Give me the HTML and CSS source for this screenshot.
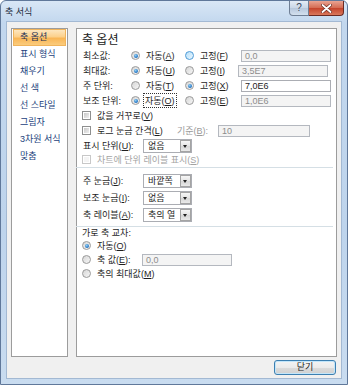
FILE: index.html
```html
<!DOCTYPE html>
<html lang="ko">

<head>
    <meta charset="UTF-8">
    <meta name="viewport" content="width=device-width, initial-scale=1.0">
    <link rel="stylesheet" href="styles.css">
</head>

<body>
    <div class="window">
        <div class="titlebar">
            <span class="title">축 서식</span>
            <div class="caption-btns">
                <span class="cap-help">?</span>
                <span class="cap-close">
                    <svg width="11" height="9" viewBox="0 0 11 9">
                        <path d="M1.5 1 L9.5 8 M9.5 1 L1.5 8" stroke="#6a2a20" stroke-width="3.2" stroke-linecap="round"/>
                        <path d="M1.5 1 L9.5 8 M9.5 1 L1.5 8" stroke="#fff" stroke-width="1.8" stroke-linecap="round"/>
                    </svg>
                </span>
            </div>
        </div>

        <div class="dialog">
            <div class="panels">
                <ul class="nav">
                    <li class="nav-item selected">축 옵션</li>
                    <li class="nav-item">표시 형식</li>
                    <li class="nav-item">채우기</li>
                    <li class="nav-item">선 색</li>
                    <li class="nav-item">선 스타일</li>
                    <li class="nav-item">그림자</li>
                    <li class="nav-item">3차원 서식</li>
                    <li class="nav-item">맞춤</li>
                </ul>

                <div class="content">
                    <h2 class="heading">축 옵션</h2>

                    <!-- min / max / units -->
                    <div class="opt-row">
                        <span class="opt-label">최소값:</span>
                        <span class="radio-item"><span class="radio on"></span><span>자동(<u>A</u>)</span></span>
                        <span class="radio-item second"><span class="radio hot"></span><span>고정(<u>F</u>)</span></span>
                        <span class="textbox disabled">0,0</span>
                    </div>
                    <div class="opt-row">
                        <span class="opt-label">최대값:</span>
                        <span class="radio-item"><span class="radio on"></span><span>자동(<u>U</u>)</span></span>
                        <span class="radio-item second short"><span class="radio"></span><span>고정(<u>I</u>)</span></span>
                        <span class="textbox disabled">3,5E7</span>
                    </div>
                    <div class="opt-row">
                        <span class="opt-label">주 단위:</span>
                        <span class="radio-item"><span class="radio"></span><span>자동(<u>T</u>)</span></span>
                        <span class="radio-item second"><span class="radio on"></span><span>고정(<u>X</u>)</span></span>
                        <span class="textbox">7,0E6</span>
                    </div>
                    <div class="opt-row">
                        <span class="opt-label">보조 단위:</span>
                        <span class="radio-item"><span class="radio on"></span><span class="focus">자동(<u>O</u>)</span></span>
                        <span class="radio-item second"><span class="radio"></span><span>고정(<u>E</u>)</span></span>
                        <span class="textbox disabled">1,0E6</span>
                    </div>

                    <div class="check-row">
                        <span class="check-item"><span class="check"></span><span>값을 거꾸로(<u>V</u>)</span></span>
                    </div>
                    <div class="check-row">
                        <span class="check-item fixed"><span class="check"></span><span>로그 눈금 간격(<u>L</u>)</span></span>
                        <span class="base-label">기준(<u>B</u>):</span>
                        <span class="textbox disabled wide">10</span>
                    </div>
                    <div class="select-row first">
                        <span class="select-label">표시 단위(<u>U</u>):</span>
                        <span class="select"><span class="select-text">없음</span><span class="arrow"></span></span>
                    </div>
                    <div class="check-row last">
                        <span class="check-item muted"><span class="check"></span><span>차트에 단위 레이블 표시(<u>S</u>)</span></span>
                    </div>

                    <div class="sep"></div>

                    <div class="select-row">
                        <span class="select-label">주 눈금(<u>J</u>):</span>
                        <span class="select"><span class="select-text">바깥쪽</span><span class="arrow"></span></span>
                    </div>
                    <div class="select-row">
                        <span class="select-label">보조 눈금(<u>I</u>):</span>
                        <span class="select"><span class="select-text">없음</span><span class="arrow"></span></span>
                    </div>
                    <div class="select-row">
                        <span class="select-label">축 레이블(<u>A</u>):</span>
                        <span class="select"><span class="select-text">축의 열</span><span class="arrow"></span></span>
                    </div>

                    <div class="sep lower"></div>

                    <div class="cross-title">가로 축 교차:</div>
                    <div class="cross-row">
                        <span class="radio-item"><span class="radio on"></span><span>자동(<u>O</u>)</span></span>
                    </div>
                    <div class="cross-row">
                        <span class="radio-item value"><span class="radio"></span><span>축 값(<u>E</u>):</span></span>
                        <span class="textbox disabled">0,0</span>
                    </div>
                    <div class="cross-row">
                        <span class="radio-item"><span class="radio"></span><span>축의 최대값(<u>M</u>)</span></span>
                    </div>
                </div>
            </div>

            <div class="footer">
                <button class="close-btn">닫기</button>
            </div>
        </div>
    </div>
</body>

</html>
```

FILE: styles.css
```css
/* Base */
* {
    box-sizing: border-box;
}

body {
    margin: 0;
    font-family: "Liberation Sans", "Noto Sans CJK KR", sans-serif;
    font-size: 9px;
    color: #1e1e1e;
    background: #ffffff;
}

u {
    text-decoration: underline;
    text-underline-offset: 1px;
}

/* Window frame */
.window {
    width: 348px;
    height: 385px;
    border: 1px solid #60789a;
    border-radius: 6px 6px 0 0;
    background: linear-gradient(#d9e7f6, #c2d7ee 22px, #bed4ec 60%, #c9dcf0);
    display: flex;
    flex-direction: column;
}

.titlebar {
    height: 21px;
    display: flex;
    align-items: flex-start;
}

.title {
    margin: 5px 0 0 4px;
    line-height: 12px;
    color: #1c2b3c;
}

.caption-btns {
    margin-left: auto;
    margin-right: 3px;
    display: flex;
}

.cap-help {
    width: 20px;
    height: 15px;
    border: 1px solid #6f7f95;
    border-top: none;
    border-radius: 0 0 0 4px;
    background: linear-gradient(#e4ecf6, #c9d6e6 50%, #b6c7dc 51%, #d3e0ee);
    color: #39475a;
    font-size: 10px;
    line-height: 13px;
    text-align: center;
}

.cap-close {
    width: 35px;
    height: 15px;
    border: 1px solid #6b2a22;
    border-left: none;
    border-top: none;
    border-radius: 0 0 4px 0;
    background: linear-gradient(#e9a493, #d46a51 50%, #c4432b 51%, #d9785c);
    display: flex;
    align-items: center;
    justify-content: center;
}

/* Dialog body */
.dialog {
    margin: 0 6px 6px 6px;
    flex: 1;
    background: #f0f0f0;
    box-shadow: 0 0 0 1px #a3b9d3;
    padding: 6px 4px 0 4px;
}

.panels {
    display: flex;
    gap: 8px;
    height: 329px;
}

/* Left list */
.nav {
    list-style: none;
    margin: 0;
    padding: 0;
    width: 57px;
    background: #ffffff;
    border: 1px solid #9c9c9c;
}

.nav-item {
    height: 17px;
    line-height: 17px;
    margin: 0 1px;
    padding-left: 7px;
    color: #1b3f7c;
    white-space: nowrap;
}

.nav-item.selected {
    background: linear-gradient(#fde9c6, #fcd18c 45%, #f9b656 55%, #fbcf83);
    box-shadow: inset 0 0 0 1px #f0b45c;
    color: #1b2f55;
}

/* Right panel */
.content {
    width: 261px;
    background: #ffffff;
    border: 1px solid #9c9c9c;
    padding: 3px 0 0 6px;
}

.heading {
    margin: 0 0 0 -1px;
    font-size: 12px;
    font-weight: normal;
    line-height: 16px;
    color: #222222;
}

.opt-row {
    display: flex;
    align-items: center;
    height: 15px;
}

.opt-label {
    width: 48px;
}

.radio-item {
    display: flex;
    align-items: center;
    gap: 6px;
    width: 54px;
    white-space: nowrap;
}

.radio-item.second {
    width: 56px;
}

.radio-item.second.short {
    width: 53px;
}

.radio {
    position: relative;
    width: 9px;
    height: 9px;
    flex: none;
    border-radius: 50%;
    border: 1px solid #9a9a9a;
    background: linear-gradient(135deg, #d6d6d6, #f7f7f7);
}

.radio.on::after {
    content: "";
    position: absolute;
    inset: 1.5px;
    border-radius: 50%;
    background: radial-gradient(circle at 40% 35%, #8fd0f5, #1f6fc0 70%);
}

.radio.hot {
    border-color: #4d9ad6;
    background: linear-gradient(135deg, #b9e0fa, #e8f6fe);
}

.focus {
    outline: 1px dotted #333333;
    outline-offset: 0;
    padding: 0 1px;
    margin-left: -2px;
}

.textbox {
    width: 90px;
    height: 12px;
    border: 1px solid #abadb3;
    background: #ffffff;
    padding-left: 3px;
    line-height: 10px;
    color: #1e1e1e;
}

.textbox.disabled {
    background: #f4f4f4;
    border-color: #b4b8bf;
    color: #8c8c8c;
}

.textbox.wide {
    width: 92px;
}

/* Checkbox rows */
.check-row {
    display: flex;
    align-items: center;
    height: 15px;
}

.check-row.last {
    height: 13px;
}

.check-item {
    display: flex;
    align-items: center;
    gap: 6px;
    margin-left: -1px;
    white-space: nowrap;
}

.check-item.fixed {
    width: 95px;
}

.check {
    position: relative;
    width: 9px;
    height: 9px;
    flex: none;
    border: 1px solid #8e8f8f;
    background: #ffffff;
}

.check::after {
    content: "";
    position: absolute;
    inset: 1px;
    background: linear-gradient(135deg, #c9c9c9, #efefef);
}

.check-item.muted {
    color: #a3a3a3;
}

.check-item.muted .check {
    border-color: #c8c8c8;
}

.check-item.muted .check::after {
    background: #f4f4f4;
}

.base-label {
    width: 41px;
    color: #9a9a9a;
}

/* Dropdown rows */
.select-row {
    display: flex;
    align-items: center;
    height: 17px;
}

.select-row.first {
    height: 15px;
}

.select-label {
    width: 60px;
    white-space: nowrap;
}

.select {
    display: flex;
    align-items: center;
    width: 49px;
    height: 14px;
    border: 1px solid #abadb3;
    background: #ffffff;
}

.select-text {
    padding-left: 4px;
    white-space: nowrap;
    line-height: 12px;
}

.arrow {
    position: relative;
    margin-left: auto;
    width: 11px;
    height: 12px;
    border: 1px solid #a4a4a4;
    background: linear-gradient(#f6f6f6, #e4e4e4 50%, #d6d6d6 51%, #e9e9e9);
}

.arrow::after {
    content: "";
    position: absolute;
    left: 2px;
    top: 4px;
    border-left: 2.5px solid transparent;
    border-right: 2.5px solid transparent;
    border-top: 3px solid #222222;
}

.sep {
    height: 1px;
    width: 257px;
    margin: 1px 0 4px -7px;
    background: #d5dfe5;
}

.sep.lower {
    margin: 3px 0 0 -7px;
}

/* Crossing options */
.cross-title {
    height: 12px;
    line-height: 12px;
    margin-left: -1px;
}

.cross-row {
    display: flex;
    align-items: center;
    height: 14px;
    margin-left: -1px;
}

.cross-row:nth-of-type(odd) {
    height: 13.5px;
}

.radio-item.value {
    width: 60px;
}

/* Footer */
.footer {
    display: flex;
    justify-content: flex-end;
    margin-top: 3px;
    padding-right: 1px;
}

.close-btn {
    width: 62px;
    height: 15px;
    padding: 0;
    font-family: inherit;
    font-size: 9px;
    line-height: 11px;
    color: #1e1e1e;
    border: 1px solid #3c7fb1;
    border-radius: 3px;
    background: linear-gradient(#f4f4f4, #ebebeb 50%, #dcdcdc 51%, #d0d0d0);
    box-shadow: inset 0 0 0 1px #c3e6fa;
}
```
